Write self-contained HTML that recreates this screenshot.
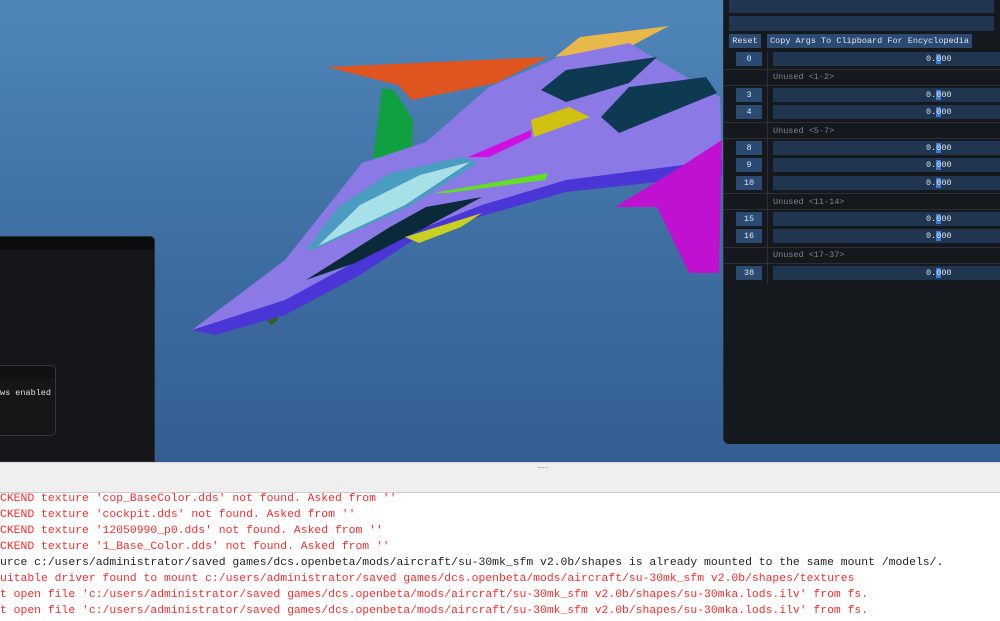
<!DOCTYPE html>
<html><head><meta charset="utf-8"><style>
*{margin:0;padding:0;box-sizing:border-box}
body{width:1000px;height:621px;overflow:hidden;background:#fff;position:relative;font-family:"Liberation Mono",monospace}
#vp{position:absolute;left:0;top:0;width:1000px;height:462px;background:linear-gradient(180deg,#4f86b9 0%,#3f6fa3 50%,#335e93 100%);overflow:hidden}
#band{position:absolute;left:0;top:462px;width:1000px;height:31px;background:#efefef;border-top:1px solid #d8d8d8;border-bottom:1px solid #cfcfcf}
#log{position:absolute;left:0;top:491px;width:1000px;font-family:"Liberation Mono","Noto Sans CJK SC",monospace;font-size:11.4px;line-height:16px;color:#ff2a2a;white-space:pre}
#log .k{color:#222}
#rp{position:absolute;left:723px;top:0;width:277px;height:444px;background:#15181c;border-radius:0 0 0 6px;border-left:1px solid #2a2e33}
.bar{position:absolute;background:#1f3550}
.btn{position:absolute;background:#2a4a72;color:#dfe6ee;font-size:8.5px;line-height:14px;text-align:center}
.sl{position:absolute;left:49px;width:228px;height:14px;background:#1f3550;color:#dfe6ee;font-size:8.5px;line-height:14px}
.sl span{position:absolute;left:153px}
.sl b{font-weight:normal;background:#3d7ad6}
.un{position:absolute;left:49px;color:#7b8590;font-size:8.5px;line-height:12px}
.hl{position:absolute;left:0;width:277px;height:1px;background:#2b3036}
#lp{position:absolute;left:0;top:236px;width:155px;height:226px;background:#141619;border-radius:0 5px 0 0;border:1px solid #2a2d31;border-left:none}
#lp .h{height:13px;background:#0b0c0d;border-radius:0 5px 0 0}
#ib{position:absolute;left:0;top:365px;width:56px;height:71px;background:#151618;border:1px solid #34383d;border-left:none;border-radius:0 5px 5px 0;color:#e0e0e0;font-size:8.5px}
</style></head><body>
<div id="vp">
<svg width="1000" height="462" style="position:absolute;left:0;top:0">
<polygon points="327,67 548,57 496,83 412,100 398,85" fill="#e05420"/>
<polygon points="555,57 580,37 669,26 629,47" fill="#e8b84a"/>
<polygon points="382,88 394,90 413,120 412,147 373,160" fill="#10a040"/>
<polygon points="261,313 275,303 278,320 271,325" fill="#356025"/>
<polygon points="192,330 285,260 362,163 426,142 489,87 559,57 629,43 720,97 722,167 566,187 496,207 426,227 355,273 285,313 215,333" fill="#8b7ae6"/>
<polygon points="192,330 285,300 355,262 405,235 482,205 566,180 722,160 722,175 566,192 496,212 426,232 360,275 285,315 215,335" fill="#4a36d6"/>
<polygon points="306,250 338,207 390,173 461,157 478,163 408,207 313,250" fill="#4a9cc0"/>
<polygon points="318,246 360,205 420,175 470,162 405,205" fill="#a8e0e8"/>
<polygon points="306,280 390,227 426,207 482,197 426,227 355,263" fill="#0a2a3a"/>
<polygon points="405,237 482,213 461,227 419,243" fill="#c8d020"/>
<polygon points="541,90 566,70 657,57 629,83 566,102" fill="#0d3a52"/>
<polygon points="601,117 629,87 706,77 717,93 619,133" fill="#0d3a52"/>
<polygon points="531,120 569,107 590,117 534,137" fill="#d0c010"/>
<polygon points="468,157 531,130 531,137 489,157" fill="#d010e0"/>
<polygon points="433,193 548,173 545,180 447,193" fill="#60e020"/>
<polygon points="615,207 671,173 722,140 719,273 689,273 657,207" fill="#c010d0"/>
</svg>
<div id="lp"><div class="h"></div></div>
<div id="ib"><div style="height:12px;background:#0f1012;border-radius:0 5px 0 0"></div><div style="position:absolute;top:22px;left:0">ws enabled</div></div>
<div id="rp">
<div class="bar" style="left:5px;top:0;width:265px;height:13px"></div>
<div class="bar" style="left:5px;top:16px;width:265px;height:15px"></div>
<div class="btn" style="left:5px;top:34px;width:32px">Reset</div>
<div class="btn" style="left:43px;top:34px;width:205px">Copy Args To Clipboard For Encyclopedia</div>
<div style="position:absolute;left:43px;top:52px;width:1px;height:232px;background:#2b3036"></div>
<div class="btn" style="left:12px;top:52px;width:26px">0</div><div class="sl" style="top:52px"><span>0.<b>0</b>00</span></div>
<div class="hl" style="top:69px"></div><div class="un" style="top:71px">Unused &lt;1-2&gt;</div><div class="hl" style="top:85px"></div>
<div class="btn" style="left:12px;top:88px;width:26px">3</div><div class="sl" style="top:88px"><span>0.<b>0</b>00</span></div>
<div class="btn" style="left:12px;top:105px;width:26px">4</div><div class="sl" style="top:105px"><span>0.<b>0</b>00</span></div>
<div class="hl" style="top:122px"></div><div class="un" style="top:125px">Unused &lt;5-7&gt;</div><div class="hl" style="top:138px"></div>
<div class="btn" style="left:12px;top:141px;width:26px">8</div><div class="sl" style="top:141px"><span>0.<b>0</b>00</span></div>
<div class="btn" style="left:12px;top:158px;width:26px">9</div><div class="sl" style="top:158px"><span>0.<b>0</b>00</span></div>
<div class="btn" style="left:12px;top:176px;width:26px">10</div><div class="sl" style="top:176px"><span>0.<b>0</b>00</span></div>
<div class="hl" style="top:193px"></div><div class="un" style="top:196px">Unused &lt;11-14&gt;</div><div class="hl" style="top:209px"></div>
<div class="btn" style="left:12px;top:212px;width:26px">15</div><div class="sl" style="top:212px"><span>0.<b>0</b>00</span></div>
<div class="btn" style="left:12px;top:229px;width:26px">16</div><div class="sl" style="top:229px"><span>0.<b>0</b>00</span></div>
<div class="hl" style="top:247px"></div><div class="un" style="top:249px">Unused &lt;17-37&gt;</div><div class="hl" style="top:263px"></div>
<div class="btn" style="left:12px;top:266px;width:26px">38</div><div class="sl" style="top:266px"><span>0.<b>0</b>00</span></div>
</div>
</div>
<div id="band"><div style="position:absolute;left:538px;top:4px;width:10px;border-top:1px dotted #aaa"></div></div>
<div id="log">CKEND texture 'cop_BaseColor.dds' not found. Asked from ''
CKEND texture 'cockpit.dds' not found. Asked from ''
CKEND texture '12050990_p0.dds' not found. Asked from ''
CKEND texture '1_Base_Color.dds' not found. Asked from ''
<span class="k">urce c:/users/administrator/saved games/dcs.openbeta/mods/aircraft/su-30mk_sfm v2.0b/shapes is already mounted to the same mount /models/.</span>
uitable driver found to mount c:/users/administrator/saved games/dcs.openbeta/mods/aircraft/su-30mk_sfm v2.0b/shapes/textures
t open file 'c:/users/administrator/saved games/dcs.openbeta/mods/aircraft/su-30mk_sfm v2.0b/shapes/su-30mka.lods.ilv' from fs.
t open file 'c:/users/administrator/saved games/dcs.openbeta/mods/aircraft/su-30mk_sfm v2.0b/shapes/su-30mka.lods.ilv' from fs.</div>
</body></html>
